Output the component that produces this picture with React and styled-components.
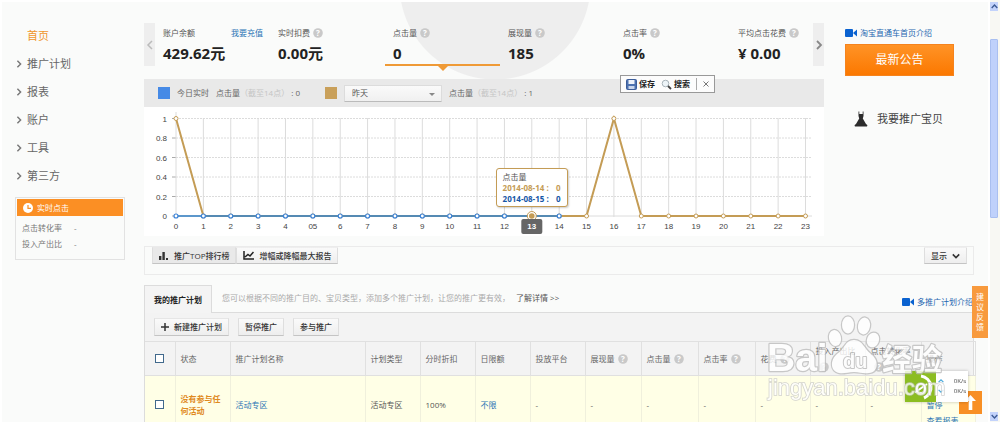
import styled, { createGlobalStyle } from "styled-components"

const menu = ["推广计划", "报表", "账户", "工具", "第三方"]

const metrics = [
    { label: "账户余额", value: "429.62元", link: "我要充值" },
    { label: "实时扣费", value: "0.00元", help: true },
    { label: "点击量", value: "0", help: true, active: true },
    { label: "展现量", value: "185", help: true },
    { label: "点击率", value: "0%", help: true },
    { label: "平均点击花费", value: "¥ 0.00", help: true },
]

const columns = [
    { label: "状态", width: 55 },
    { label: "推广计划名称", width: 135 },
    { label: "计划类型", width: 55 },
    { label: "分时折扣", width: 55 },
    { label: "日限额", width: 55 },
    { label: "投放平台", width: 55 },
    { label: "展现量", width: 56, help: true },
    { label: "点击量", width: 57, help: true },
    { label: "点击率", width: 57, help: true },
    { label: "花费", width: 55, help: true },
    { label: "投入产出比", width: 55, help: true },
    { label: "点击转化率", width: 56, help: true },
    { label: "操作", width: 54 },
]

const yesterday = [1, 0, 0, 0, 0, 0, 0, 0, 0, 0, 0, 0, 0, 0, 0, 0, 1, 0, 0, 0, 0, 0, 0, 0]
const today = yesterday.slice(0, 15).map(() => 0)
const px = (i) => 32 + i * 27.37
const py = (v) => 109 - v * 97.5
const points = (data) => data.map((v, i) => `${px(i)},${py(v)}`).join(" ")

function Help() {
    return (
        <HelpIcon viewBox="0 0 10 10" aria-hidden="true">
            <circle cx="5" cy="5" r="4.8" fill="#c9c9c9" />
            <text x="5" y="8" textAnchor="middle" fontSize="8" fontWeight="700" fill="#fff">?</text>
        </HelpIcon>
    )
}

function Chevron({ dir = "right", size = 8, color = "#777", width = 2 }) {
    const paths = {
        right: "M3 1 L7 5 L3 9",
        left: "M7 1 L3 5 L7 9",
        down: "M1 3 L5 7 L9 3",
        up: "M1 7 L5 3 L9 7",
    }
    return (
        <svg width={size} height={size} viewBox="0 0 10 10" fill="none" stroke={color} strokeWidth={width} aria-hidden="true">
            <path d={paths[dir]} />
        </svg>
    )
}

function Camera() {
    return (
        <svg width="13" height="8" viewBox="0 0 13 8" fill="#0a62d0" aria-hidden="true">
            <rect x="0" y="0" width="8" height="8" rx="1" />
            <path d="M8 4 L12 0.5 V7.5 Z" />
        </svg>
    )
}

function Chart() {
    return (
        <ChartBox>
            <ChartSvg viewBox="0 0 680 129" role="img" aria-label="点击量">
                {[1, 0.8, 0.6, 0.4, 0.2, 0].map((v) => (
                    <g key={v}>
                        <line x1="32" x2="668" y1={py(v)} y2={py(v)} stroke="#dcdcdc" strokeDasharray={v ? "2 1" : undefined} />
                        <line x1="28" x2="32" y1={py(v)} y2={py(v)} stroke="#aaa" />
                        <text x="23" y={py(v) + 3} textAnchor="end">{v}</text>
                    </g>
                ))}
                {yesterday.map((v, i) => (
                    <g key={i}>
                        <line x1={px(i)} x2={px(i)} y1={i ? 11 : 5} y2="110" stroke="#dcdcdc" />
                        {i !== 13 && <text x={px(i)} y="122" textAnchor="middle">{i === 5 ? "05" : i}</text>}
                    </g>
                ))}
                <polyline points={points(yesterday)} fill="none" stroke="#c49c55" strokeWidth="2" />
                <polyline points={points(today)} fill="none" stroke="#4287c4" strokeOpacity="0.85" strokeWidth="2" />
                {yesterday.map((v, i) => (
                    <circle key={i} cx={px(i)} cy={py(v)} r="2" fill="#fff" stroke="#c49c55" />
                ))}
                {today.map((v, i) => (
                    <circle key={i} cx={px(i)} cy={py(v)} r="2" fill="#fff" stroke="#3a82d8" strokeWidth="1.2" />
                ))}
                <circle cx={px(13)} cy={py(0)} r="4.5" fill="#fff" stroke="#c49c55" />
                <circle cx={px(13)} cy={py(0)} r="2.8" fill="#c49c55" />
                <rect x={px(13) - 10.5} y="112" width="21" height="15" rx="2" fill="#666" />
                <ActiveHour x={px(13)} y="122" textAnchor="middle">13</ActiveHour>
            </ChartSvg>
            <Tooltip>
                <p>点击量</p>
                <Reading $color="#c49c55"><span>2014-08-14 :</span><span>0</span></Reading>
                <Reading $color="#1556a6"><span>2014-08-15 :</span><span>0</span></Reading>
            </Tooltip>
        </ChartBox>
    )
}

function Watermark() {
    return (
        <WatermarkSvg viewBox="0 0 184 92" aria-hidden="true">
            <g fill="#fff" stroke="#bcbcbc" strokeWidth="2.4" strokeLinejoin="round" paintOrder="stroke">
                <text x="1" y="58" fontSize="39" fontWeight="700">Bai</text>
                <ellipse cx="69" cy="25" rx="6" ry="8" transform="rotate(-12 69 25)" />
                <ellipse cx="82" cy="12" rx="6" ry="8.5" />
                <ellipse cx="98" cy="13" rx="6" ry="8.5" transform="rotate(10 98 13)" />
                <ellipse cx="107" cy="27" rx="6" ry="7.5" transform="rotate(20 107 27)" />
                <path d="M88 27 C97 27 98 36 105 41 C113 47 113 59 103 60 C97 61 94 59 88 59 C82 59 78 61 73 60 C64 58 64 47 71 41 C79 36 79 27 88 27 Z" />
                <text x="77" y="55" fontSize="20" fontWeight="700" strokeWidth="2">du</text>
                <text x="116" y="57" fontSize="30" fontWeight="700">经验</text>
            </g>
            <text x="2" y="82" fontSize="22" fill="#fff" stroke="#c8c8c8" strokeWidth="1.6" paintOrder="stroke">jingyan.baidu.com</text>
        </WatermarkSvg>
    )
}

export default function App() {
    return (
        <Window>
            <GlobalStyle />
            <Page>
                <Sidebar>
                    <MenuLink href="#" $active>首页</MenuLink>
                    {menu.map((item) => (
                        <MenuLink href="#" key={item}><Chevron width={1.8} />{item}</MenuLink>
                    ))}
                    <LiveCard>
                        <LiveTitle>
                            <svg width="10" height="10" viewBox="0 0 10 10" aria-hidden="true">
                                <circle cx="5" cy="5" r="5" fill="#fff" />
                                <path d="M5 2 V5.3 H8" fill="none" stroke="#fb8f24" strokeWidth="1.2" />
                            </svg>
                            实时点击
                        </LiveTitle>
                        <LiveRow><dt>点击转化率</dt><dd>-</dd></LiveRow>
                        <LiveRow><dt>投入产出比</dt><dd>-</dd></LiveRow>
                    </LiveCard>
                </Sidebar>

                <Content>
                    <TopRow>
                        <Main>
                            <MetricStrip>
                                <ArrowButton aria-label="上一组"><Chevron dir="left" color="#bbb" size={10} width={1.5} /></ArrowButton>
                                <Metrics>
                                    {metrics.map((m) => (
                                        <Metric key={m.label} $active={m.active}>
                                            <MetricLabel>
                                                {m.label}
                                                {m.help && <Help />}
                                                {m.link && <BlueLink href="#">{m.link}</BlueLink>}
                                            </MetricLabel>
                                            <MetricValue>{m.value}</MetricValue>
                                        </Metric>
                                    ))}
                                </Metrics>
                                <ArrowButton aria-label="下一组"><Chevron size={10} color="#888" width={1.8} /></ArrowButton>
                            </MetricStrip>

                            <Legend>
                                <Swatch $color="#468ae6" />
                                <LegendText>今日实时</LegendText>
                                <LegendText>点击量<Faint>（截至14点）</Faint> : 0</LegendText>
                                <Swatch $color="#c9a05a" $second />
                                <SelectBox>
                                    <DaySelect aria-label="对比日期"><option>昨天</option></DaySelect>
                                    <Caret />
                                </SelectBox>
                                <LegendText>点击量<Faint>（截至14点）</Faint> : 1</LegendText>
                                <QuickBar>
                                    <QuickButton>
                                        <svg width="11" height="11" viewBox="0 0 11 11" aria-hidden="true">
                                            <rect x="0.5" y="0.5" width="10" height="10" rx="1" fill="#4d72b0" stroke="#3c5d99" />
                                            <rect x="2.5" y="1" width="6" height="4" fill="#eef3fb" />
                                            <rect x="2.5" y="7" width="6" height="3" fill="#c9d6ec" />
                                        </svg>
                                        保存
                                    </QuickButton>
                                    <QuickButton>
                                        <svg width="11" height="11" viewBox="0 0 11 11" fill="none" aria-hidden="true">
                                            <circle cx="4.5" cy="4.5" r="3.3" fill="#edf4f8" stroke="#a9b4ba" />
                                            <path d="M7 7 L10 10" stroke="#444" strokeWidth="1.8" />
                                        </svg>
                                        搜索
                                    </QuickButton>
                                    <CloseButton aria-label="关闭">
                                        <svg width="6" height="6" viewBox="0 0 6 6" stroke="#777" aria-hidden="true">
                                            <path d="M0.5 0.5 L5.5 5.5 M5.5 0.5 L0.5 5.5" />
                                        </svg>
                                    </CloseButton>
                                </QuickBar>
                            </Legend>
                            <Chart />
                        </Main>

                        <Aside>
                            <VideoLink href="#"><Camera />淘宝直通车首页介绍</VideoLink>
                            <NoticeButton>最新公告</NoticeButton>
                            <PromoLink href="#">
                                <svg width="14" height="17" viewBox="0 0 14 17" fill="#2c2c2c" aria-hidden="true">
                                    <path d="M4.5 0.5 H5.3 V3 H8.7 V0.5 H9.5 V5 L8.8 7.5 L12 13 C14 14 13.5 15.5 12.5 15.5 H1.5 C0.5 15.5 0 14 2 13 L5.2 7.5 L4.5 5 Z" />
                                </svg>
                                我要推广宝贝
                            </PromoLink>
                        </Aside>
                    </TopRow>

                    <ReportBar>
                        <ReportTabs>
                            <SmallButton $joined $pressed>
                                <svg width="10" height="8" viewBox="0 0 10 8" fill="#333" aria-hidden="true">
                                    <path d="M0 4 H2.4 V8 H0 Z M3.4 0 H5.8 V8 H3.4 Z M7 6 H9 V8 H7 Z" />
                                </svg>
                                推广TOP排行榜
                            </SmallButton>
                            <SmallButton $joined>
                                <svg width="11" height="9" viewBox="0 0 11 9" fill="none" stroke="#222" strokeWidth="1.5" aria-hidden="true">
                                    <path d="M1 0 V8 H11 M2 6 L5 3.5 L7 5 L10.5 1" />
                                </svg>
                                增幅或降幅最大报告
                            </SmallButton>
                        </ReportTabs>
                        <SmallButton $joined>显示<Chevron dir="down" color="#333" /></SmallButton>
                    </ReportBar>

                    <TabRow>
                        <PlanTab>我的推广计划</PlanTab>
                        <Hint>
                            您可以根据不同的推广目的、宝贝类型，添加多个推广计划，让您的推广更有效，
                            <a href="#">了解详情 &gt;&gt;</a>
                        </Hint>
                        <VideoLink href="#"><Camera />多推广计划介绍</VideoLink>
                    </TabRow>

                    <Panel>
                        <Toolbar>
                            <SmallButton>
                                <svg width="8" height="8" viewBox="0 0 8 8" stroke="#333" strokeWidth="1.5" aria-hidden="true">
                                    <path d="M4 0 V8 M0 4 H8" />
                                </svg>
                                新建推广计划
                            </SmallButton>
                            <SmallButton>暂停推广</SmallButton>
                            <SmallButton>参与推广</SmallButton>
                        </Toolbar>
                        <Table>
                            <colgroup>
                                <Col $width={30} />
                                {columns.map((c) => <Col key={c.label} $width={c.width} />)}
                            </colgroup>
                            <thead>
                                <tr>
                                    <Th><Check type="checkbox" aria-label="全选" /></Th>
                                    {columns.map((c) => (
                                        <Th key={c.label}>{c.label}{c.help && <Help />}</Th>
                                    ))}
                                </tr>
                            </thead>
                            <tbody>
                                <tr>
                                    <Td><Check type="checkbox" aria-label="活动专区" /></Td>
                                    <Td><Status>没有参与任何活动</Status></Td>
                                    <Td><BlueLink href="#">活动专区</BlueLink></Td>
                                    <Td>活动专区</Td>
                                    <Td>100%</Td>
                                    <Td><BlueLink href="#">不限</BlueLink></Td>
                                    {[1, 2, 3, 4, 5, 6, 7].map((n) => <Td key={n}>-</Td>)}
                                    <Actions>
                                        <BlueLink href="#">暂停</BlueLink>
                                        <BlueLink href="#">查看报表</BlueLink>
                                    </Actions>
                                </tr>
                            </tbody>
                        </Table>
                    </Panel>
                </Content>
            </Page>

            <Scrollbar aria-hidden="true">
                <ScrollEnd><Chevron dir="up" color="#3c5a94" size={7} /></ScrollEnd>
                <Track><Thumb /></Track>
                <ScrollEnd><Chevron dir="down" color="#3c5a94" size={7} /></ScrollEnd>
            </Scrollbar>

            <Feedback href="#">建议反馈</Feedback>
            <BackTop aria-label="返回顶部">
                <svg width="11" height="15" viewBox="0 0 11 15" fill="#fff" aria-hidden="true">
                    <path d="M5.5 0 L11 6 H7.3 V15 H3.7 V6 H0 Z" />
                </svg>
            </BackTop>
            <SpeedWidget>
                <SpeedIcon viewBox="0 0 31 31" aria-hidden="true">
                    <rect width="31" height="31" fill="#8cbd22" />
                    <path d="M16 5 A11.5 11.5 0 0 1 19 27" fill="none" stroke="#fff" strokeWidth="3" />
                    <ellipse cx="16" cy="17.5" rx="4" ry="4.5" fill="none" stroke="#fff" strokeWidth="2" />
                    <path d="M10 21.5 L22 13" stroke="#fff" strokeWidth="2" />
                </SpeedIcon>
                <Speeds>
                    <Speed><Chevron dir="up" color="#4aa9dc" size={6} />0K/s</Speed>
                    <Speed><Chevron dir="down" color="#4aa9dc" size={6} />0K/s</Speed>
                </Speeds>
            </SpeedWidget>
            <Watermark />
        </Window>
    )
}

const GlobalStyle = createGlobalStyle`
    * {
        box-sizing: border-box;
    }

    body {
        margin: 0;
        overflow: hidden;
        background: #fff;
        color: #555;
        font-family: "Open Sans", "Noto Sans CJK SC", sans-serif;
        font-size: 8px;
        line-height: 12px;
    }

    button, select, input {
        font: inherit;
        color: inherit;
        margin: 0;
    }

    a {
        text-decoration: none;
    }

    p, dl, dd {
        margin: 0;
    }

    svg {
        flex: none;
    }
`

const Window = styled.div`
    display: flex;
    height: 100vh;
`

const Page = styled.div`
    display: flex;
    flex: 1;
    min-width: 0;
    margin: 2px 2px 0;
    overflow: hidden;
    background: radial-gradient(circle at 493px -18px, #eeeeee 95px, #fafbfa 96px);
`

const Sidebar = styled.nav`
    flex: none;
    width: 142px;
    padding: 20px 19px 0 13px;
`

const MenuLink = styled.a`
    display: flex;
    align-items: center;
    gap: 4px;
    padding-left: ${(props) => (props.$active ? "12px" : "0")};
    color: ${(props) => (props.$active ? "#f0962c" : "#666")};
    font-size: 11px;
    line-height: 28px;
`

const LiveCard = styled.dl`
    margin-top: 7px;
    padding: 1px 1px 7px;
    border: 1px solid #e2e2e2;
`

const LiveTitle = styled.div`
    display: flex;
    align-items: center;
    gap: 4px;
    height: 17px;
    margin-bottom: 4px;
    padding-left: 6px;
    background: #fb8f24;
    color: #fff;
`

const LiveRow = styled.div`
    display: flex;
    gap: 12px;
    padding-left: 5px;
    color: #777;
    line-height: 16px;
`

const Content = styled.div`
    flex: 1;
    min-width: 0;
    padding-right: 14px;
`

const TopRow = styled.div`
    display: flex;
    gap: 21px;
`

const Main = styled.main`
    flex: 1;
    min-width: 0;
    padding-top: 21px;
`

const MetricStrip = styled.div`
    display: flex;
    margin-bottom: 13px;
`

const ArrowButton = styled.button`
    display: flex;
    align-items: center;
    justify-content: center;
    width: 11px;
    padding: 0;
    border: none;
    background: #eeeeee;
`

const Metrics = styled.div`
    display: grid;
    flex: 1;
    grid-template-columns: repeat(5, 115fr) 83fr;
`

const Metric = styled.div`
    position: relative;
    padding: 2px 7px 0 8px;

    &::after {
        content: "";
        display: ${(props) => (props.$active ? "block" : "none")};
        position: absolute;
        left: 0;
        right: 0;
        bottom: 0;
        height: 2px;
        background: #ef9a36;
    }

    &::before {
        content: "";
        display: ${(props) => (props.$active ? "block" : "none")};
        position: absolute;
        left: 50%;
        top: 100%;
        margin-left: -5px;
        border: 5px solid transparent;
        border-top-color: #ef9a36;
        border-bottom: none;
    }
`

const MetricLabel = styled.div`
    display: flex;
    align-items: center;
    justify-content: flex-start;
    line-height: 16px;
    white-space: nowrap;

    a {
        margin-left: auto;
    }
`

const MetricValue = styled.div`
    color: #222;
    font-size: 15px;
    font-weight: 700;
    line-height: 25px;
    white-space: nowrap;
`

const BlueLink = styled.a`
    color: #2a74b5;
`

const HelpIcon = styled.svg`
    width: 10px;
    height: 10px;
    margin-left: 3px;
    vertical-align: middle;
`

const Legend = styled.div`
    position: relative;
    display: flex;
    align-items: center;
    gap: 7px;
    height: 28px;
    padding-left: 14px;
    background: #e9e9e9;
    white-space: nowrap;
`

const Swatch = styled.span`
    width: 12px;
    height: 12px;
    margin-left: ${(props) => (props.$second ? "18px" : "0")};
    background: ${(props) => props.$color};
`

const LegendText = styled.span`
    color: #666;
`

const Faint = styled.span`
    color: #c4c4c4;
`

const SelectBox = styled.div`
    position: relative;
    width: 98px;
`

const DaySelect = styled.select`
    display: block;
    width: 100%;
    height: 17px;
    padding: 0 7px;
    appearance: none;
    border: 1px solid #dcdcdc;
    border-bottom-color: #bbb;
    border-radius: 1px;
    background: linear-gradient(#fafafa, #f0f0f0);
`

const Caret = styled.span`
    position: absolute;
    right: 7px;
    top: 8px;
    border: 3px solid transparent;
    border-top-color: #888;
    border-bottom: none;
    pointer-events: none;
`

const QuickBar = styled.div`
    position: absolute;
    left: 70%;
    top: -4px;
    display: flex;
    align-items: center;
    gap: 6px;
    height: 18px;
    padding: 0 5px;
    border: 1px solid #999;
    background: #fcfcfc;
`

const QuickButton = styled.button`
    display: flex;
    align-items: center;
    gap: 2px;
    padding: 0;
    border: none;
    background: none;
    color: #222;
    font-weight: 700;
`

const CloseButton = styled.button`
    display: flex;
    align-items: center;
    height: 12px;
    padding: 0 0 0 6px;
    border: none;
    border-left: 1px solid #aaa;
    background: none;
`

const ChartBox = styled.div`
    position: relative;
    background: #fff;
`

const ChartSvg = styled.svg`
    display: block;
    width: 100%;
    font-family: "Liberation Sans", sans-serif;
    font-size: 8px;
    fill: #444;
`

const ActiveHour = styled.text`
    fill: #fff;
    font-weight: 700;
`

const Tooltip = styled.div`
    position: absolute;
    left: 57%;
    top: 61px;
    transform: translateX(-50%);
    width: 72px;
    padding: 2px 6px;
    border: 1px solid #c49c55;
    border-radius: 3px;
    background: #fff;
    box-shadow: 1px 1px 2px rgba(0, 0, 0, 0.2);
    line-height: 11px;
    white-space: nowrap;
`

const Reading = styled.p`
    display: flex;
    justify-content: space-between;
    color: ${(props) => props.$color};
    font-weight: 700;
`

const Aside = styled.aside`
    flex: none;
    width: 129px;
    padding-top: 23px;
`

const VideoLink = styled.a`
    display: flex;
    align-items: center;
    gap: 2px;
    color: #1d66b0;
    line-height: 16px;
    white-space: nowrap;
`

const NoticeButton = styled.button`
    display: block;
    width: 109px;
    height: 32px;
    margin: 3px 0 33px;
    border: 1px solid #f5831d;
    background: linear-gradient(#ff9326, #fb7800);
    color: #fff;
    font-size: 12px;
`

const PromoLink = styled.a`
    display: flex;
    align-items: center;
    gap: 9px;
    padding-left: 9px;
    color: #444;
    font-size: 11px;
    line-height: 20px;
`

const ReportBar = styled.div`
    display: flex;
    align-items: flex-start;
    justify-content: space-between;
    height: 29px;
    margin: 10px 0;
    padding: 0 6px 0 7px;
    border: 1px solid #ebebeb;
`

const ReportTabs = styled.div`
    display: flex;
`

const SmallButton = styled.button`
    display: flex;
    align-items: center;
    gap: 5px;
    height: ${(props) => (props.$joined ? "17px" : "18px")};
    padding: 0 6px;
    border: 1px solid #dedede;
    border-top-color: ${(props) => (props.$joined ? "transparent" : "#e6e6e6")};
    border-bottom-color: #c4c4c4;
    background: ${(props) => (props.$pressed ? "#e9e9e9" : "linear-gradient(#fafafa, #eeeeee)")};
    color: #333;
    font-weight: 500;
    white-space: nowrap;
`

const TabRow = styled.div`
    display: flex;
    align-items: center;
    height: 27px;

    > a {
        flex: none;
        width: 72px;
        margin-left: auto;
        padding-top: 6px;
    }
`

const PlanTab = styled.button`
    height: 28px;
    align-self: flex-start;
    padding: 0 9px;
    position: relative;
    border: 1px solid #dcdcdc;
    border-bottom: none;
    background: #f4f4f4;
    color: #222;
    font-weight: 700;
`

const Hint = styled.p`
    margin-left: 10px;
    padding-bottom: 2px;
    color: #aaa;
    white-space: nowrap;

    a {
        margin-left: 6px;
        color: #555;
    }
`

const Panel = styled.section`
    border: 1px solid #dcdcdc;
    border-bottom: none;
    background: #f3f3f3;
`

const Toolbar = styled.div`
    display: flex;
    gap: 9px;
    padding: 5px 9px;
`

const Table = styled.table`
    width: 100%;
    table-layout: fixed;
    border-collapse: collapse;
`

const Col = styled.col`
    width: ${(props) => props.$width}px;
`

const Th = styled.th`
    height: 34px;
    padding: 0 5px;
    border: 1px solid #e0e0e0;
    border-left: none;
    color: #666;
    font-weight: 400;
    line-height: 16px;
    text-align: left;

    &:first-child {
        padding-left: 10px;
    }
`

const Td = styled.td`
    height: 58px;
    padding: 0 5px;
    border-right: 1px solid #f0f0dc;
    background: #ffffe6;

    &:first-child {
        padding-left: 10px;
    }
`

const Actions = styled(Td)`
    padding-top: 21px;
    line-height: 16px;
    vertical-align: top;

    a {
        display: block;
    }
`

const Status = styled.strong`
    color: #e08a1e;
`

const Check = styled.input`
    display: block;
    width: 9px;
    height: 9px;
    appearance: none;
    border: 1px solid #41698c;
    background: #fff;
`

const Scrollbar = styled.div`
    display: flex;
    flex: none;
    flex-direction: column;
    width: 10px;
    padding: 2px 0 1px;
    background: #f8f8f3;
`

const ScrollEnd = styled.span`
    display: flex;
    align-items: center;
    justify-content: center;
    height: 9px;
    margin-right: 2px;
    background: #c3d3fb;
`

const Track = styled.div`
    flex: 1;
    padding-top: 28px;
`

const Thumb = styled.div`
    height: 48%;
    margin-right: 2px;
    border: 1px solid #a9bff0;
    border-radius: 1px;
    background: #bfd1fb;
`

const Feedback = styled.a`
    position: fixed;
    right: 12px;
    top: 286px;
    width: 16px;
    padding: 6px 4px;
    background: #f89a3e;
    color: #fff;
    line-height: 10px;
`

const BackTop = styled.button`
    position: fixed;
    right: 18px;
    bottom: 8px;
    display: flex;
    align-items: center;
    justify-content: center;
    width: 23px;
    height: 23px;
    padding: 0;
    border: none;
    background: #f88f25;
`

const SpeedWidget = styled.div`
    position: fixed;
    right: 32px;
    bottom: 20px;
    display: flex;
    background: #fff;
    box-shadow: 0 0 3px rgba(0, 0, 0, 0.25);
`

const SpeedIcon = styled.svg`
    width: 31px;
    height: 31px;
`

const Speeds = styled.div`
    width: 32px;
    padding: 5px 2px;
`

const Speed = styled.div`
    display: flex;
    align-items: center;
    justify-content: space-between;
    color: #444;
    font-size: 6px;
    line-height: 10px;
`

const WatermarkSvg = styled.svg`
    position: fixed;
    right: 50px;
    bottom: 17px;
    width: 184px;
    height: 92px;
    opacity: 0.8;
    font-family: "Liberation Sans", "Noto Sans CJK SC", sans-serif;
    pointer-events: none;
`
